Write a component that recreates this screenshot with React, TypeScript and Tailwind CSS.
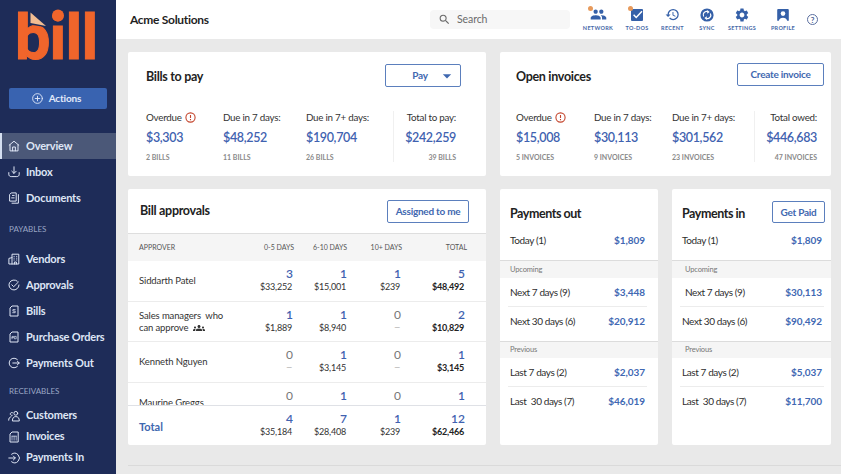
import React from 'react';
import { clsx } from 'clsx';
import { MdArrowDropDown, MdGroups, MdHistory, MdPeople, MdSearch, MdSettings } from 'react-icons/md';

/* ---------- ICONS ---------- */

const Glyph: React.FC<{ children: React.ReactNode; size?: number }> = ({ children, size = 12 }) => (
    <svg width={size} height={size} viewBox="0 0 12 12" fill="none" stroke="currentColor" strokeWidth={1} strokeLinecap="round" strokeLinejoin="round" className="shrink-0">
        {children}
    </svg>
);

const HomeIcon = () => (
    <Glyph>
        <path d="M1.2 5.2 6 1.2l4.8 4M2 4.8v6.1h8V4.8" />
        <path d="M4.6 10.8V7h2.8v3.8" />
    </Glyph>
);

const InboxIcon = () => (
    <Glyph>
        <path d="M6 .8v6.4M3.8 5.2 6 7.4l2.2-2.2M.8 6.6v1.6c0 1.6 1 2.4 2.4 2.4h5.6c1.4 0 2.4-.8 2.4-2.4V6.6" />
    </Glyph>
);

const DocumentsIcon = () => (
    <Glyph>
        <path d="M3.6.9h4.6v8.2H1.6V3zM4.4 3.4h1.8M3.6 5.9h2.6" />
        <path d="M10.4 2.6v8.6H4" />
    </Glyph>
);

const VendorsIcon = () => (
    <Glyph>
        <path d="M4 11V1.2h6.8V11H.9V5.4L4 4.6M6.4 11V9h2v2" />
        <path d="M6 3.4h.2M8.6 3.4h.2M6 5.2h.2M8.6 5.2h.2M6 7h.2M8.6 7h.2" />
    </Glyph>
);

const ApprovalsIcon = () => (
    <Glyph>
        <path d="M9.2 2.1A5 5 0 1 0 11 6" />
        <path d="m3.8 5.8 1.9 1.9L10.4 3" />
    </Glyph>
);

const BillsIcon = () => (
    <Glyph>
        <path d="M4.4 1H10v10H2V3.4z" />
        <path d="M7.2 4.6H4.9v1.5h2.3v1.6H4.7" strokeWidth={0.8} />
    </Glyph>
);

const OrdersIcon = () => (
    <Glyph>
        <path d="M4.4 1H10v10H2V3.4z" />
        <path d="M4 7.8V5.4h1.5v1.2H4M6.7 5.4h1.5v2.4H6.7z" strokeWidth={0.7} />
    </Glyph>
);

const PaymentsOutIcon = () => (
    <Glyph>
        <path d="M9.4 2.6a4.8 4.8 0 1 0 0 6.8" />
        <path d="M4.8 6h6.4M9.5 4.3 11.2 6 9.5 7.7" />
    </Glyph>
);

const CustomersIcon = () => (
    <Glyph>
        <circle cx="7.8" cy="3.3" r="1.9" />
        <path d="M4.4 10.6c0-2.6 1.2-4 3.4-4s3.5 1.4 3.5 4z" />
        <path d="M4.2 5.4a1.5 1.5 0 1 1 .2-2.8M.7 10.2c0-2 .7-3.2 2.3-3.4" />
    </Glyph>
);

const InvoicesIcon = () => (
    <Glyph>
        <path d="M4.4 1h5.8v10H2V3.4z" />
        <path d="M4 5.2h4.2M4 5.2v4M6.1 5.2v4M8.2 5.2v4" strokeWidth={0.7} />
    </Glyph>
);

const PaymentsInIcon = () => (
    <Glyph>
        <path d="M3.6 2.2a4.8 4.8 0 1 1 0 7.6" />
        <path d="M.8 6h6.4M5.4 4.1 7.3 6 5.4 7.9" />
    </Glyph>
);

const AlertIcon = () => (
    <svg width="11" height="11" viewBox="0 0 11 11" fill="none" stroke="#c4452d" strokeWidth="1.1">
        <circle cx="5.5" cy="5.5" r="4.6" />
        <path d="M5.5 2.9v3.2M5.5 7v1.2" />
    </svg>
);

const TodoIcon = () => (
    <svg width="14" height="14" viewBox="0 0 14 14" fill="none">
        <rect x="1" y="1" width="12" height="12" rx="1" fill="#3560a8" />
        <path d="m3.6 6.8 2.6 2.7L12 3.2" stroke="#fff" strokeWidth="1.5" />
    </svg>
);

const SyncIcon = () => (
    <svg width="14" height="14" viewBox="0 0 14 14" fill="none">
        <circle cx="7" cy="7" r="6.6" fill="#3560a8" />
        <path d="M3.6 8.6A3.6 3.6 0 0 1 7.8 3.5M10.4 5.4a3.6 3.6 0 0 1-4.2 5.1" stroke="#fff" strokeWidth="1.2" />
        <path d="M7.2 1.9 9.6 3.9 7.2 5.7zM6.8 12.1 4.4 10.1l2.4-1.8z" fill="#fff" />
    </svg>
);

const ProfileIcon = () => (
    <svg width="14" height="14" viewBox="0 0 14 14">
        <path d="M1.2 2c0-.5.4-.9.9-.9h9.8c.5 0 .9.4.9.9v10.8h-1.6c-.5-2-2-3-4.2-3s-3.7 1-4.2 3H1.2z" fill="#3560a8" />
        <circle cx="7" cy="5.6" r="2.3" fill="#fff" />
    </svg>
);

const Logo = () => (
    <svg width="92" height="66" viewBox="0 0 92 66" className="block overflow-visible">
        <g fill="#f0652b">
            <text x="-3 31.5 47.5 63.5" y="50" fontFamily="Roboto, 'Liberation Sans', sans-serif" fontWeight="700" fontSize="63" stroke="#f0652b" strokeWidth="1">bill</text>
            <circle cx="40" cy="6.5" r="6" />
        </g>
        <path d="M11.500 1.500 30 19.500 24 17.500 11.500 15.500z" fill="#1e2c58" />
        <path d="M12.500 3.500 28 17 12.500 14z" fill="#f1bd92" />
    </svg>
);

/* ---------- SIDEBAR ---------- */

type NavEntry = { label: string; icon: React.FC; active?: boolean };

const mainNav: NavEntry[] = [
    { label: 'Overview', icon: HomeIcon, active: true },
    { label: 'Inbox', icon: InboxIcon },
    { label: 'Documents', icon: DocumentsIcon },
];

const payablesNav: NavEntry[] = [
    { label: 'Vendors', icon: VendorsIcon },
    { label: 'Approvals', icon: ApprovalsIcon },
    { label: 'Bills', icon: BillsIcon },
    { label: 'Purchase Orders', icon: OrdersIcon },
    { label: 'Payments Out', icon: PaymentsOutIcon },
];

const receivablesNav: NavEntry[] = [
    { label: 'Customers', icon: CustomersIcon },
    { label: 'Invoices', icon: InvoicesIcon },
    { label: 'Payments In', icon: PaymentsInIcon },
];

const NavList: React.FC<{ items: NavEntry[]; dense?: boolean }> = ({ items, dense }) => (
    <ul>
        {items.map(({ label, icon: Icon, active }) => (
            <li
                key={label}
                className={clsx(
                    'flex items-center gap-1.5 border-l-2 pl-1.5 text-[11px] font-bold tracking-[-0.18px] whitespace-nowrap text-[#dfe6f5]',
                    dense ? 'h-[21px]' : 'h-[26px]',
                    active ? 'border-[#d5dff0] bg-[#4b5878]' : 'border-transparent',
                )}
            >
                <Icon />
                <span>{label}</span>
            </li>
        ))}
    </ul>
);

const Sidebar = () => (
    <aside className="w-[116px] shrink-0 bg-[#1e2c58]">
        <div className="h-[88px] pt-[9px] pl-[18px]">
            <Logo />
        </div>
        <button className="mx-[9px] mb-6 flex h-[21px] w-[98px] items-center justify-center gap-1.5 rounded-xs bg-[#3963b0] pr-[3px] text-[10px] font-bold tracking-[-0.15px] text-[#e2eafa]">
            <Glyph size={11}>
                <circle cx="6" cy="6" r="5.3" />
                <path d="M6 3.5v5M3.5 6h5" />
            </Glyph>
            Actions
        </button>
        <NavList items={mainNav} />
        <h3 className="flex h-[35px] items-center pl-[9px] text-[8px] text-[#9aa6c4]">PAYABLES</h3>
        <NavList items={payablesNav} />
        <h3 className="flex h-[29px] items-center pl-[9px] text-[8px] text-[#9aa6c4]">RECEIVABLES</h3>
        <NavList items={receivablesNav} dense />
    </aside>
);

/* ---------- HEADER ---------- */

const HeaderAction: React.FC<{ label: string; width: string; dot?: boolean; children: React.ReactNode }> = ({ label, width, dot, children }) => (
    <button className={clsx('flex flex-col items-center', width)}>
        <span className="relative flex h-[15px] items-center">
            {children}
            {dot && <span className="absolute -top-px -left-0.5 size-[5px] rounded-full bg-[#e79a5c]" />}
        </span>
        <span className="mt-[2px] text-[5.5px] leading-[8px] font-bold tracking-[0.3px] text-[#4668a8]">{label}</span>
    </button>
);

const Header = () => (
    <header className="flex h-[39px] shrink-0 items-center bg-white pl-3.5">
        <h1 className="w-[300px] text-[12px] font-bold tracking-[-0.3px] text-[#1f1f1f]">Acme Solutions</h1>
        <div className="flex h-[19px] w-[140px] items-center gap-1.5 rounded-sm bg-[#f7f7f7] pl-2 text-[10.5px] tracking-[-0.1px] text-[#6b6b6b]">
            <MdSearch size={13} />
            Search
        </div>
        <nav className="ml-2 flex items-center text-[#3560a8]">
            <HeaderAction label="NETWORK" width="w-10" dot>
                <MdPeople size={17} />
            </HeaderAction>
            <HeaderAction label="TO-DOS" width="w-[38px]" dot>
                <TodoIcon />
            </HeaderAction>
            <HeaderAction label="RECENT" width="w-[33px]">
                <MdHistory size={15} />
            </HeaderAction>
            <HeaderAction label="SYNC" width="w-9">
                <SyncIcon />
            </HeaderAction>
            <HeaderAction label="SETTINGS" width="w-[34px]">
                <MdSettings size={16} />
            </HeaderAction>
            <HeaderAction label="PROFILE" width="w-12">
                <ProfileIcon />
            </HeaderAction>
            <span className="flex size-[11px] items-center justify-center rounded-full border border-[#5b6f9f] text-[8px] leading-none font-bold text-[#4a5f94]">?</span>
        </nav>
    </header>
);

/* ---------- CARDS ---------- */

const OutlineButton: React.FC<{ className: string; children: React.ReactNode }> = ({ className, children }) => (
    <button className={clsx('flex items-center justify-center rounded-xs border border-[#5b7fbd] bg-white text-[10px] font-bold tracking-[-0.25px] whitespace-nowrap text-[#3f68b0]', className)}>
        {children}
    </button>
);

type StatItem = { label: string; amount: string; count: string; width: string; alert?: boolean };

const Stat: React.FC<StatItem & { last?: boolean }> = ({ label, amount, count, width, alert, last }) => (
    <div className={clsx('flex flex-col whitespace-nowrap', width, last && 'items-end border-l border-[#f0f0f0]')}>
        <span className="flex h-[12px] items-center gap-[3px] text-[9.8px] tracking-[-0.25px] text-[#333]">
            {label}
            {alert && <AlertIcon />}
        </span>
        <span className="mt-[6px] text-[12.5px] leading-[18px] font-semibold tracking-[-0.35px] text-[#3f62b0]">{amount}</span>
        <span className="mt-[5px] text-[7px] leading-[10px] font-bold text-[#8a8a8a]">{count}</span>
    </div>
);

const billStats: StatItem[] = [
    { label: 'Overdue', amount: '$3,303', count: '2 BILLS', width: 'w-[77px]', alert: true },
    { label: 'Due in 7 days:', amount: '$48,252', count: '11 BILLS', width: 'w-[83px]' },
    { label: 'Due in 7+ days:', amount: '$190,704', count: '26 BILLS', width: 'w-[87px]' },
    { label: 'Total to pay:', amount: '$242,259', count: '39 BILLS', width: 'w-[63px]' },
];

const invoiceStats: StatItem[] = [
    { label: 'Overdue', amount: '$15,008', count: '5 INVOICES', width: 'w-[78px]', alert: true },
    { label: 'Due in 7 days:', amount: '$30,113', count: '9 INVOICES', width: 'w-[78px]' },
    { label: 'Due in 7+ days:', amount: '$301,562', count: '23 INVOICES', width: 'w-[82px]' },
    { label: 'Total owed:', amount: '$446,683', count: '47 INVOICES', width: 'w-[63px]' },
];

const SummaryCard: React.FC<{ title: string; stats: StatItem[]; className: string; action: React.ReactNode }> = ({ title, stats, className, action }) => (
    <section className={clsx('h-[124px] rounded-xs bg-white', className)}>
        <div className="flex h-[59px] items-start justify-between">
            <h2 className="pt-[16px] text-[12.5px] leading-[17px] font-bold tracking-[-0.3px] text-[#222]">{title}</h2>
            {action}
        </div>
        <div className="flex">
            {stats.map((s, i) => (
                <Stat key={s.label} {...s} last={i === stats.length - 1} />
            ))}
        </div>
    </section>
);

type Cell = [count: string, amount?: string];

const approvals: { name: React.ReactNode; cells: Cell[]; nameClass?: string }[] = [
    { name: 'Siddarth Patel', cells: [['3', '$33,252'], ['1', '$15,001'], ['1', '$239'], ['5', '$48,492']] },
    {
        name: (
            <>
                <span className="block">Sales managers&nbsp; who</span>
                <span className="flex items-center gap-[5px]">
                    can approve <MdGroups size={12} />
                </span>
            </>
        ),
        cells: [['1', '$1,889'], ['1', '$8,940'], ['0', '—'], ['2', '$10,829']],
    },
    { name: 'Kenneth Nguyen', cells: [['0', '—'], ['1', '$3,145'], ['0', '—'], ['1', '$3,145']] },
    { name: 'Maurine Greggs', cells: [['0'], ['1'], ['0'], ['1']], nameClass: 'pt-[3px]' },
];

const totals: Cell[] = [['4', '$35,184'], ['7', '$28,408'], ['1', '$239'], ['12', '$62,466']];

const columns = 'grid grid-cols-[96px_58px_54px_54px_64px] pl-[11px]';

const Cells: React.FC<{ cells: Cell[] }> = ({ cells }) => (
    <>
        {cells.map(([count, amount], i) => (
            <div key={i} className="pt-[6px] text-right">
                <div className={clsx('text-[12px] leading-[14px]', count === '0' ? 'text-[#777]' : 'font-semibold text-[#3f62b0]')}>{count}</div>
                {amount && (
                    <div
                        className={clsx(
                            'pr-px leading-[12px] tracking-[-0.2px]',
                            amount === '—' ? 'text-[7.5px] text-[#999]' : 'text-[9px]',
                            amount !== '—' && (i === 3 ? 'font-bold text-[#222]' : 'text-[#333]'),
                        )}
                    >
                        {amount}
                    </div>
                )}
            </div>
        ))}
    </>
);

const ApprovalsCard = () => (
    <section className="h-[256px] w-[358px] overflow-hidden rounded-xs bg-white">
        <div className="flex h-[44px] items-center justify-between pr-[17px] pl-[12px]">
            <h2 className="text-[12.5px] font-bold tracking-[-0.3px] text-[#222]">Bill approvals</h2>
            <OutlineButton className="h-[23px] w-[82px]">Assigned to me</OutlineButton>
        </div>
        <div className={clsx(columns, 'h-[28px] items-center border-t border-[#dedede] bg-[#f5f5f5] text-right text-[7px] text-[#555]')}>
            <span className="text-left">APPROVER</span>
            <span className="-mr-px">0-5 DAYS</span>
            <span>6-10 DAYS</span>
            <span className="-mr-px">10+ DAYS</span>
            <span className="-mr-0.5">TOTAL</span>
        </div>
        <div className="h-[144px] overflow-hidden">
            {approvals.map((row, i) => (
                <div key={i} className={clsx(columns, 'h-[40.5px] border-b border-[#ececec]')}>
                    <div className={clsx('self-center pt-px text-[9.5px] leading-[12px] tracking-[-0.12px] whitespace-nowrap text-[#333]', row.nameClass)}>{row.name}</div>
                    <Cells cells={row.cells} />
                </div>
            ))}
        </div>
        <div className={clsx(columns, 'h-[40px] border-t border-[#dfe1e6]')}>
            <div className="self-center pt-[3px] text-[11px] font-bold text-[#3f68b0]">Total</div>
            <Cells cells={totals} />
        </div>
    </section>
);

type PaymentLine = { label: string; amount: string; indent?: boolean };

const PaymentRow: React.FC<PaymentLine & { divided?: boolean }> = ({ label, amount, indent, divided }) => (
    <div className={clsx('mr-[6px] ml-[8px] flex h-[29px] items-center justify-between pr-[2px] pl-[2px] text-[10px] whitespace-nowrap', divided && 'border-b border-[#ececec]')}>
        <span className={clsx('tracking-[-0.4px] text-[#2e2e2e]', indent && 'pl-[3px]')}>{label}</span>
        <span className="font-bold tracking-[-0.05px] text-[#4168b3]">{amount}</span>
    </div>
);

const Band: React.FC<{ label: string; className: string }> = ({ label, className }) => (
    <div className={clsx('flex items-center border-t border-[#dcdcdc] bg-[#f5f5f5] text-[7.5px] tracking-[-0.15px] text-[#777]', className)}>{label}</div>
);

const PaymentsCard: React.FC<{
    title: string;
    action?: React.ReactNode;
    width: string;
    inset: string;
    bandInset: string;
    today: string;
    upcoming: PaymentLine[];
    previous: PaymentLine[];
}> = ({ title, action, width, inset, bandInset, today, upcoming, previous }) => (
    <section className={clsx('h-[256px] rounded-xs bg-white', width)}>
        <div className="flex h-[37px] items-start justify-between pr-[6px] pl-[10px]">
            <h2 className="pt-[17px] text-[12.5px] leading-[16px] font-bold tracking-[-0.45px] text-[#222]">{title}</h2>
            {action}
        </div>
        <div className={inset}>
            <PaymentRow label="Today (1)" amount={today} />
        </div>
        <Band label="Upcoming" className={clsx('mt-[5px] h-[18px]', bandInset)} />
        <div className={inset}>
            {upcoming.map((line, i) => (
                <PaymentRow key={line.label} {...line} divided={i === 0} />
            ))}
        </div>
        <Band label="Previous" className={clsx('mt-[5px] h-[17px]', bandInset)} />
        <div className={inset}>
            {previous.map((line, i) => (
                <PaymentRow key={line.label} {...line} divided={i === 0} />
            ))}
        </div>
    </section>
);

/* ---------- PAGE ---------- */

const App: React.FC = () => {
    return (
        <div className="flex h-[474px] w-[841px] overflow-hidden bg-[#e9e9e9] font-['Lato','Liberation_Sans',sans-serif]">
            <Sidebar />
            <div className="flex min-w-0 flex-1 flex-col">
                <Header />
                <main className="flex flex-1 flex-col pt-[13px]">
                    <div className="flex gap-3.5 pl-3">
                        <SummaryCard
                            title="Bills to pay"
                            stats={billStats}
                            className="w-[358px] pl-[18px]"
                            action={
                                <OutlineButton className="mt-[12px] mr-[25px] h-[23px] w-[76px] pl-[23px]">
                                    Pay
                                    <MdArrowDropDown size={20} className="ml-[9px]" />
                                </OutlineButton>
                            }
                        />
                        <SummaryCard
                            title="Open invoices"
                            stats={invoiceStats}
                            className="w-[331px] pl-[16px]"
                            action={<OutlineButton className="mt-[11px] mr-[7px] h-[23px] w-[87px]">Create invoice</OutlineButton>}
                        />
                    </div>
                    <div className="mt-[13px] flex gap-3.5 pl-3">
                        <ApprovalsCard />
                        <PaymentsCard
                            title="Payments out"
                            width="w-[158px]"
                            inset="pr-[5px]"
                            bandInset="pl-[10px]"
                            today="$1,809"
                            upcoming={[{ label: 'Next 7 days (9)', amount: '$3,448' }, { label: 'Next 30 days (6)', amount: '$20,912' }]}
                            previous={[{ label: 'Last 7 days (2)', amount: '$2,037' }, { label: 'Last\u00a0 30 days (7)', amount: '$46,019' }]}
                        />
                        <PaymentsCard
                            title="Payments in"
                            width="w-[159px]"
                            action={<OutlineButton className="mt-[12px] h-[22px] w-[53px]">Get Paid</OutlineButton>}
                            inset="pr-px"
                            bandInset="pl-[13px]"
                            today="$1,809"
                            upcoming={[{ label: 'Next 7 days (9)', amount: '$30,113', indent: true }, { label: 'Next 30 days (6)', amount: '$90,492' }]}
                            previous={[{ label: 'Last 7 days (2)', amount: '$5,037' }, { label: 'Last\u00a0 30 days (7)', amount: '$11,700' }]}
                        />
                    </div>
                    <div className="mt-[20px] ml-3 border-t border-[#dadada]" />
                </main>
            </div>
        </div>
    );
};

export default App;
